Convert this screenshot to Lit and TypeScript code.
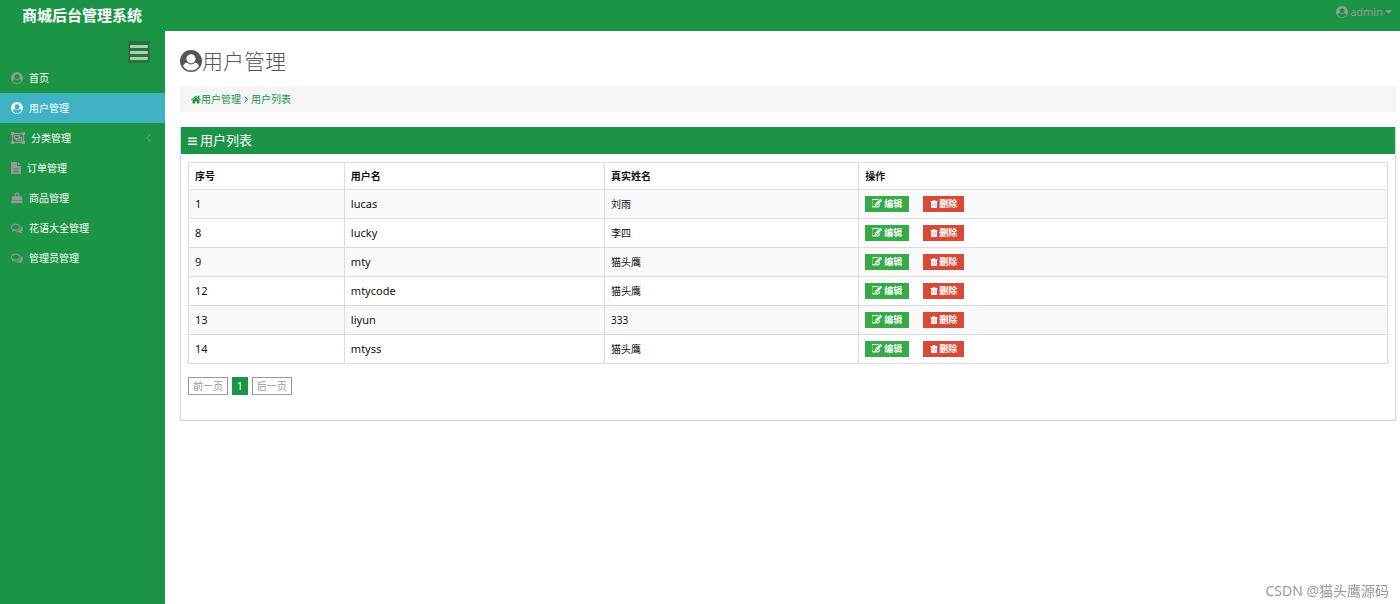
import { LitElement, html, css, svg, TemplateResult } from "lit";
import { customElement, property, state } from "lit/decorators.js";

const glyphs: Record<string, { box: string; shape: TemplateResult }> = {
  user: {
    box: "0 0 24 24",
    shape: svg`<path d="M12 0a12 12 0 1 1 0 24a12 12 0 1 1 0-24zM12 4.600a5 5 0 1 0 0 10a5 5 0 1 0 0-10zM3.400 17.800A10.400 10.400 0 0 0 20.600 17.800Q19.700 13.700 16.400 13.800Q12 17.800 7.600 13.800Q4.300 13.700 3.400 17.800z" fill-rule="evenodd"/>`,
  },
  group: {
    box: "0 0 14 12",
    shape: svg`<path d="M0 0h3v1h8V0h3v3h-1v6h1v3h-3v-1H3v1H0V9h1V3H0zM3 2v1H2v6h1v1h8V9h1V3h-1V2zM3 3h6v2h2v4H5V7H3zM4 4v2h4V4zM9 6v1H6v1h4V6z" fill-rule="evenodd" stroke="currentColor" stroke-width=".3"/>`,
  },
  file: {
    box: "0 0 10 12",
    shape: svg`<path d="M1 0h5v4h4v7q0 1-1 1H1q-1 0-1-1V1q0-1 1-1zM7 0l3 3H7zM2.500 6v.6h5V6zM2.500 7.800v.6h5v-.6zM2.500 9.600v.6h5v-.6z" fill-rule="evenodd"/>`,
  },
  bag: {
    box: "0 0 14 14",
    shape: svg`<path d="M4 5V4a3 3 0 0 1 6 0v1h2.500l.8 5H.7l.8-5zM5.200 5h3.600V4a1.800 1.800 0 0 0-3.600 0zM.6 10.500h12.800L13.800 13H.2z" fill-rule="evenodd"/>`,
  },
  comments: {
    box: "0 128 1792 1536",
    shape: svg`<path d="M704 384q-153 0-286 52t-211.5 141-78.5 191q0 82 53 158t149 132l97 56-35 84q34-20 62-39l44-31 53 10q78 14 153 14 153 0 286-52t211.5-141 78.5-191-78.5-191-211.5-141-286-52zm0-128q191 0 353.5 68.5t256.5 186.5 94 257-94 257-256.5 186.5-353.5 68.5q-86 0-176-16-124 88-278 128-36 9-86 16h-3q-11 0-20.5-8t-11.5-21q-1-3-1-6.5t.5-6.5 2-6l2.5-5 3.5-5.5 4-5 4.5-5 4-4.5q5-6 23-25t26-29.5 22.5-29 25-38.5 20.5-44q-124-72-195-177t-71-224q0-139 94-257t256.5-186.5 353.5-68.5zm822 1169q10 24 20.5 44t25 38.5 22.5 29 26 29.5 23 25q1 1 4 4.5t4.500 5 4 5 3.500 5.500l2.500 5 2 6 .5 6.500-1 6.500q-3 14-13 22t-22 7q-50-7-86-16-154-40-278-128-90 16-176 16-271 0-472-132 58 4 88 4 161 0 309-45t264-129q125-92 192-212t67-254q0-77-23-152 129 71 204 178t75 230q0 120-71 224.5t-195 176.5z" stroke="currentColor" stroke-width="30"/>`,
  },
  home: {
    box: "64 160 1664 1440",
    shape: svg`<path d="M1472 992v480q0 26-19 45t-45 19h-384v-384h-256v384h-384q-26 0-45-19t-19-45v-480q0-1 .5-3t.5-3l575-474 575 474q1 2 1 6zm223-69l-62 74q-8 9-21 11h-3q-13 0-21-7l-692-577-692 577q-12 8-24 7-13-2-21-11l-62-74q-8-10-7-23.5t11-21.5l719-599q32-26 76-26t76 26l244 204v-195q0-14 9-23t23-9h192q14 0 23 9t9 23v408l219 182q10 8 11 21.5t-7 23.5z"/>`,
  },
  bars: {
    box: "0 0 18 16",
    shape: svg`<path d="M1 1h16q1 0 1 1v1q0 1-1 1H1q-1 0-1-1V2q0-1 1-1zM1 7h16q1 0 1 1v1q0 1-1 1H1q-1 0-1-1V8q0-1 1-1zM1 13h16q1 0 1 1v1q0 1-1 1H1q-1 0-1-1v-1q0-1 1-1z"/>`,
  },
  edit: {
    box: "128 128 1664 1536",
    shape: svg`<path d="M888 1184l116-116-152-152-116 116v56h96v96h56zm440-720q-16-16-33 1l-350 350q-17 17-1 33t33-1l350-350q17-17 1-33zm80 594v190q0 119-84.5 203.5t-203.5 84.5h-832q-119 0-203.5-84.5t-84.5-203.5v-832q0-119 84.5-203.5t203.5-84.5h832q63 0 117 25 15 7 18 23 3 17-9 29l-49 49q-14 14-32 8-23-6-45-6h-832q-66 0-113 47t-47 113v832q0 66 47 113t113 47h832q66 0 113-47t47-113v-126q0-13 9-22l64-64q15-15 35-7t20 29zm-96-738l288 288-672 672h-288v-288zm444 132l-92 92-288-288 92-92q28-28 68-28t68 28l152 152q28 28 28 68t-28 68z" stroke="currentColor" stroke-width="60"/>`,
  },
  trash: {
    box: "0 0 14 16",
    shape: svg`<path d="M4 2l1-2h4l1 2h4v2h-1v10q0 2-2 2H3q-2 0-2-2V4H0V2zM5.500 2h3l-.5-1H6zM4.300 6v7h.6V6zM6.700 6v7h.6V6zM9.100 6v7h.6V6z" fill-rule="evenodd"/>`,
  },
  left: {
    box: "0 0 6 10",
    shape: svg`<path d="M5 1L1 5l4 4" fill="none" stroke="currentColor"/>`,
  },
  right: {
    box: "0 0 6 10",
    shape: svg`<path d="M1 1l4 4-4 4" fill="none" stroke="currentColor" stroke-width="1.500"/>`,
  },
  caret: { box: "0 0 8 4", shape: svg`<path d="M0 0h8L4 4z"/>` },
};

@customElement("app-icon")
class AppIcon extends LitElement {
  static styles = css`
    :host {
      display: inline-flex;
      flex: none;
    }
    svg {
      width: 100%;
      height: 100%;
      fill: currentColor;
    }
  `;
  @property() name = "user";
  render() {
    const g = glyphs[this.name];
    return html`<svg viewBox=${g.box} aria-hidden="true">${g.shape}</svg>`;
  }
}

const menu = [
  { label: "首页", icon: "user", size: "round" },
  { label: "用户管理", icon: "user", size: "round" },
  { label: "分类管理", icon: "group", size: "wide", nested: true },
  { label: "订单管理", icon: "file", size: "narrow" },
  { label: "商品管理", icon: "bag", size: "round" },
  { label: "花语大全管理", icon: "comments", size: "round" },
  { label: "管理员管理", icon: "comments", size: "round" },
];

const users = [
  { id: 1, login: "lucas", name: "刘雨" },
  { id: 8, login: "lucky", name: "李四" },
  { id: 9, login: "mty", name: "猫头鹰" },
  { id: 12, login: "mtycode", name: "猫头鹰" },
  { id: 13, login: "liyun", name: "333" },
  { id: 14, login: "mtyss", name: "猫头鹰" },
];

@customElement("app-root")
class AppRoot extends LitElement {
  static styles = css`
    :host {
      display: flex;
      flex-direction: column;
      min-height: 100vh;
      background: #fff;
      color: #111;
      font: 10px/16px "Noto Sans", "Noto Sans CJK SC", sans-serif;
    }
    * {
      box-sizing: border-box;
    }
    a {
      color: inherit;
      text-decoration: none;
    }
    button {
      font: inherit;
      cursor: pointer;
    }
    .top {
      display: flex;
      justify-content: space-between;
      align-items: flex-start;
      height: 31px;
      padding: 0 8px 0 22px;
      background: #1c9446;
    }
    .brand {
      color: #fff;
      font-size: 15px;
      font-weight: 700;
      line-height: 30px;
    }
    .account {
      display: flex;
      align-items: center;
      gap: 2px;
      height: 23px;
      padding: 0;
      border: 0;
      background: none;
      color: #999;
      font-size: 11px;
    }
    .caret {
      width: 7px;
      height: 4px;
    }
    .body {
      display: flex;
      flex: 1;
    }
    .side {
      flex: none;
      width: 165px;
      padding-top: 10px;
      background: #1c9446;
      color: #fff;
    }
    .toggle {
      display: flex;
      align-items: center;
      justify-content: center;
      width: 22px;
      height: 22px;
      margin: 0 15px 0 auto;
      padding: 0;
      border: 0;
      background: #2e6f42;
      color: #a3d4b0;
    }
    .toggle-icon {
      width: 18px;
      height: 16px;
    }
    .menu {
      margin: 0;
      padding: 0;
      list-style: none;
    }
    .item {
      display: flex;
      align-items: center;
      gap: 6px;
      height: 30px;
      padding: 0 14px 0 11px;
    }
    .item app-icon {
      color: #999;
    }
    .item.active {
      background: #3fb2c3;
    }
    .item.active app-icon {
      color: #fff;
    }
    .round {
      width: 12px;
      height: 12px;
    }
    .wide {
      width: 14px;
      height: 12px;
    }
    .narrow {
      width: 10px;
      height: 12px;
    }
    .more {
      width: 5px;
      height: 8px;
      margin-left: auto;
    }
    .main {
      flex: 1;
      min-width: 0;
      padding: 14px 4px 0 15px;
    }
    .title {
      display: flex;
      align-items: center;
      margin: 0;
      color: #555;
      font-size: 21px;
      font-weight: 300;
      line-height: 32px;
    }
    .title-icon {
      width: 22px;
      height: 22px;
    }
    .crumbs {
      display: flex;
      align-items: center;
      gap: 3px;
      height: 26px;
      margin: 9px 0 15px;
      padding: 0 11px;
      background: #f5f5f5;
      color: #333;
    }
    .crumb {
      display: flex;
      align-items: center;
      color: #1c9446;
    }
    .home {
      width: 10px;
      height: 9px;
    }
    .sep {
      width: 4px;
      height: 7px;
    }
    .panel {
      border: 1px solid #c9d8e8;
      border-top: 0;
      padding-bottom: 25px;
    }
    .panel-head {
      display: flex;
      align-items: center;
      gap: 3px;
      margin: 0 0 8px;
      padding: 0 7px;
      background: #1c9446;
      color: #fff;
      font-size: 13px;
      font-weight: 400;
      line-height: 27px;
    }
    .list-icon {
      width: 9px;
      height: 8px;
    }
    .wrap {
      padding: 0 7px;
    }
    .grid {
      width: 100%;
      table-layout: fixed;
      border-collapse: collapse;
    }
    th,
    td {
      height: 29px;
      padding: 0 6px 1px;
      border: 1px solid #ddd;
      text-align: left;
    }
    th {
      height: 27px;
      padding-bottom: 0;
      font-weight: 700;
    }
    tbody tr:nth-child(odd) {
      background: #f9f9f9;
    }
    .c1 {
      width: 13%;
    }
    .c2 {
      width: 21.7%;
    }
    .c3 {
      width: 21.2%;
    }
    .latin {
      font-size: 11px;
    }
    .actions {
      display: flex;
      gap: 14px;
    }
    .act {
      display: flex;
      align-items: center;
      justify-content: center;
      height: 16px;
      padding: 0 7px;
      border: 0;
      color: #fff;
      font-size: 9px;
      font-weight: 700;
      line-height: 16px;
    }
    .act-edit {
      gap: 2px;
      background: #35aa47;
    }
    .act-del {
      gap: 1px;
      background: #d84a38;
    }
    .edit-icon {
      width: 10px;
      height: 9px;
    }
    .del-icon {
      width: 8px;
      height: 8px;
    }
    .pager {
      display: flex;
      gap: 4px;
      margin-top: 13px;
    }
    .page {
      height: 18px;
      padding: 0 4px;
      border: 1px solid #999;
      background: #fff;
      color: #999;
      line-height: 16px;
    }
    .page.current {
      border-color: #1c9446;
      background: #1c9446;
      color: #fff;
    }
    .mark {
      position: fixed;
      right: 11px;
      bottom: 3px;
      color: #999;
      font-size: 14px;
      line-height: 20px;
    }
  `;

  @state() private current = 1;

  render() {
    return html`
      <header class="top">
        <a class="brand" href="#">商城后台管理系统</a>
        <button class="account">
          <app-icon class="round" name="user"></app-icon>admin<app-icon class="caret" name="caret"></app-icon>
        </button>
      </header>
      <div class="body">
        <nav class="side">
          <button class="toggle" aria-label="菜单"><app-icon class="toggle-icon" name="bars"></app-icon></button>
          <ul class="menu">
            ${menu.map(
              (m, i) => html`<li>
                <a class="item ${i === this.current ? "active" : ""}" href="#" @click=${() => (this.current = i)}>
                  <app-icon class=${m.size} name=${m.icon}></app-icon>${m.label}
                  ${m.nested ? html`<app-icon class="more" name="left"></app-icon>` : ""}
                </a>
              </li>`
            )}
          </ul>
        </nav>
        <main class="main">
          <h1 class="title"><app-icon class="title-icon" name="user"></app-icon>用户管理</h1>
          <nav class="crumbs">
            <a class="crumb" href="#"><app-icon class="home" name="home"></app-icon>用户管理</a>
            <app-icon class="sep" name="right"></app-icon>
            <a class="crumb" href="#">用户列表</a>
          </nav>
          <section class="panel">
            <h2 class="panel-head"><app-icon class="list-icon" name="bars"></app-icon>用户列表</h2>
            <div class="wrap">
              <table class="grid">
                <thead>
                  <tr>
                    <th class="c1">序号</th>
                    <th class="c2">用户名</th>
                    <th class="c3">真实姓名</th>
                    <th>操作</th>
                  </tr>
                </thead>
                <tbody>
                  ${users.map(
                    (u) => html`<tr>
                      <td class="latin">${u.id}</td>
                      <td class="latin">${u.login}</td>
                      <td>${u.name}</td>
                      <td>
                        <div class="actions">
                          <button class="act act-edit"><app-icon class="edit-icon" name="edit"></app-icon>编辑</button>
                          <button class="act act-del"><app-icon class="del-icon" name="trash"></app-icon>删除</button>
                        </div>
                      </td>
                    </tr>`
                  )}
                </tbody>
              </table>
              <div class="pager">
                <button class="page">前一页</button>
                <button class="page current">1</button>
                <button class="page">后一页</button>
              </div>
            </div>
          </section>
        </main>
      </div>
      <div class="mark">CSDN @猫头鹰源码</div>
    `;
  }
}
